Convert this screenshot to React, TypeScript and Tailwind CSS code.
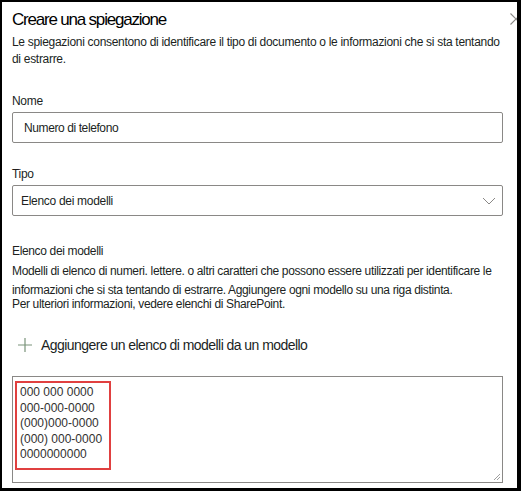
import React from "react"

const patterns = [
  "000 000 0000",
  "000-000-0000",
  "(000)000-0000",
  "(000) 000-0000",
  "0000000000",
]

export default function App() {
  return (
    <div
      className="w-[522px] h-[492px] bg-white"
      style={{ fontFamily: '"Liberation Sans", Arial, sans-serif' }}
    >
      <div className="w-[521px] h-[491px] border-l-2 border-t-2 border-r-[4px] border-b-[3px] border-black text-[#201f1e] relative overflow-hidden">
        {/* Intestazione */}
        <div className="flex items-start justify-between pl-[10px] pt-[5px]">
          <h1 className="text-[17px] leading-[26px] tracking-[-1.2px] text-black">Creare una spiegazione</h1>
          <svg width="12" height="12" viewBox="0 0 12 12" className="mt-[6px] mr-[-5px]">
            <path d="M0.5 0.5 L11.5 11.5 M11.5 0.5 L0.5 11.5" stroke="#8a8886" strokeWidth="1.1" />
          </svg>
        </div>
        <p className="px-[10px] text-[12px] leading-[17px] tracking-[-0.3px] mt-[1px] w-[510px]">
          Le spiegazioni consentono di identificare il tipo di documento o le informazioni che si sta tentando di estrarre.
        </p>

        <div className="px-[10px] mt-[25px]">
          <label className="block text-[12px] leading-[16px] tracking-[-0.3px] mb-[3px]">Nome</label>
          <div className="w-[491px] h-[31px] border border-[#8a8886] rounded-[2px] flex items-center pl-[11px] text-[12px] tracking-[-0.4px]">
            Numero di telefono
          </div>
        </div>

        <div className="px-[10px] mt-[23px]">
          <label className="block text-[12px] leading-[16px] tracking-[-0.3px] mb-[3px]">Tipo</label>
          <div className="w-[491px] h-[31px] border border-[#8a8886] rounded-[2px] flex items-center justify-between pl-[8px] pr-[6px] text-[12px] tracking-[-0.3px]">
            <span>Elenco dei modelli</span>
            <svg width="14" height="8" viewBox="0 0 14 8">
              <path d="M1 1 L7 7 L13 1" fill="none" stroke="#8a8886" strokeWidth="1" />
            </svg>
          </div>
        </div>

        <div className="px-[10px] mt-[27px] tracking-[-0.35px]">
          <h2 className="text-[12px] leading-[16px]">Elenco dei modelli</h2>
          <p className="text-[12px] leading-[19px] mt-[3px] w-[496px]">
            Modelli di elenco di numeri. lettere. o altri caratteri che possono essere utilizzati per identificare le informazioni che si sta tentando di estrarre. Aggiungere ogni modello su una riga distinta.
          </p>
          <p className="text-[12px] leading-[15px] mt-[-3px]">Per ulteriori informazioni, vedere elenchi di SharePoint.</p>
        </div>

        <div className="flex items-center pl-[16px] mt-[24px] gap-[9px]">
          <svg width="14" height="14" viewBox="0 0 14 14">
            <path d="M7 0 V14 M0 7 H14" stroke="#7a937a" strokeWidth="1.2" />
          </svg>
          <span className="text-[14px] leading-[18px] tracking-[-0.55px]">Aggiungere un elenco di modelli da un modello</span>
        </div>

        <div className="mx-[10px] mt-[22px] w-[491px] h-[107px] border border-[#8a8886] relative pl-[2px] pt-[4px]">
          <div className="w-[96px] border-2 border-[#e04040] pl-[3px] pt-[2px] pb-[5px] text-[12px] leading-[15.5px] text-[#323130]">
            {patterns.map((p) => (
              <div key={p}>{p}</div>
            ))}
          </div>
          <svg width="10" height="10" viewBox="0 0 10 10" className="absolute right-[1px] bottom-[1px]">
            <path d="M9 3 L3 9 M9 6 L6 9" stroke="#a0a0a0" strokeWidth="1" />
          </svg>
        </div>
      </div>
    </div>
  )
}
